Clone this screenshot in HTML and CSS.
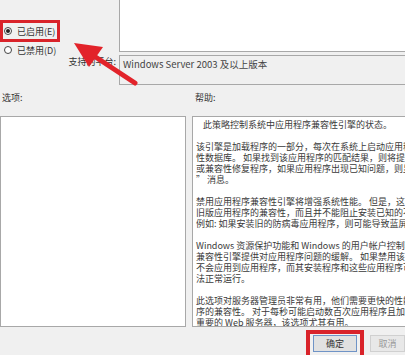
FILE: index.html
```html
<!DOCTYPE html>
<html lang="zh-CN">
<head>
    <meta charset="UTF-8">
    <meta name="viewport" content="width=device-width, initial-scale=1.0">
    <title>应用程序兼容性引擎 - 策略设置</title>
    <link rel="stylesheet" href="styles.css">
</head>
<body>
    <div class="policy-dialog">
        <div class="top-grid">
            <div class="state-group">
                <label class="radio-item marked">
                    <span class="radio checked"></span>
                    <span>已启用(E)</span>
                </label>
                <label class="radio-item plain">
                    <span class="radio"></span>
                    <span>已禁用(D)</span>
                </label>
            </div>
            <div class="comment-box"></div>
            <div class="platform-label">支持的平台:</div>
            <div class="platform-box">Windows Server 2003 及以上版本</div>
        </div>

        <div class="section-labels">
            <span>选项:</span>
            <span>帮助:</span>
        </div>

        <div class="panes">
            <div class="pane options-pane"></div>
            <div class="pane help-pane">
                <div class="help-line indent">此策略控制系统中应用程序兼容性引擎的状态。</div>
                <div class="help-blank"></div>
                <div class="help-line">该引擎是加载程序的一部分，每次在系统上启动应用程序时都会引用兼容</div>
                <div class="help-line">性数据库。 如果找到该应用程序的匹配结果，则将提供运行时解决方案</div>
                <div class="help-line">或兼容性修复程序，如果应用程序出现已知问题，则显示应用程序帮助</div>
                <div class="help-line">” 消息。</div>
                <div class="help-blank"></div>
                <div class="help-line">禁用应用程序兼容性引擎将增强系统性能。 但是，这将降低许多</div>
                <div class="help-line">旧版应用程序的兼容性，而且并不能阻止安装已知的不兼容</div>
                <div class="help-line">例如: 如果安装旧的防病毒应用程序，则可能导致蓝屏。)</div>
                <div class="help-blank"></div>
                <div class="help-line">Windows 资源保护功能和 Windows 的用户帐户控制功能使用</div>
                <div class="help-line">兼容性引擎提供对应用程序问题的缓解。 如果禁用该引擎，</div>
                <div class="help-line">不会应用到应用程序，而其安装程序和这些应用程序可能无</div>
                <div class="help-line">法正常运行。</div>
                <div class="help-blank"></div>
                <div class="help-line">此选项对服务器管理员非常有用，他们需要更快的性能并</div>
                <div class="help-line">序的兼容性。 对于每秒可能启动数百次应用程序且加载</div>
                <div class="help-line">重要的 Web 服务器，该选项尤其有用。</div>
            </div>
        </div>

        <div class="operate-btn-group">
            <div class="mark-box">
                <button class="btn btn-default">确定</button>
            </div>
            <button class="btn btn-faded">取消</button>
        </div>
    </div>

    <!-- 标注箭头 -->
    <svg class="annotation" width="405" height="355" viewBox="0 0 405 355">
        <line x1="135" y1="83" x2="94" y2="56" stroke="#e2232a" stroke-width="5" stroke-linecap="round"/>
        <polygon points="74,43 103,47 89,67" fill="#e2232a"/>
    </svg>
</body>
</html>
```

FILE: styles.css
```css
* {
    margin: 0;
    padding: 0;
    box-sizing: border-box;
}

body {
    font-family: "Noto Sans CJK SC", "Noto Sans", sans-serif;
    font-size: 9px;
    line-height: 11px;
    color: #333;
    background: #f0f0f0;
    width: 405px;
    height: 355px;
    overflow: hidden;
    position: relative;
}

.policy-dialog {
    width: 405px;
}

.top-grid {
    display: grid;
    grid-template-columns: 119px 1fr;
    grid-template-rows: 52px 33px;
}

.state-group {
    padding-top: 20px;
}

.radio-item {
    display: flex;
    align-items: center;
    gap: 5px;
    height: 16px;
}

.radio-item.marked {
    width: 60px;
    height: 22px;
    border: 3px solid #d9232a;
    padding-left: 1px;
}

.radio-item.plain {
    padding-left: 4px;
}

.radio {
    width: 8px;
    height: 8px;
    border: 1px solid #444;
    border-radius: 50%;
    background: #fff;
    display: flex;
    align-items: center;
    justify-content: center;
}

.radio.checked::after {
    content: "";
    width: 4px;
    height: 4px;
    border-radius: 50%;
    background: #222;
}

.comment-box {
    background: #fff;
    border: 1px solid #a8a8a8;
    border-top: none;
    border-right: none;
}

.platform-label {
    text-align: right;
    padding-right: 3px;
    padding-top: 4px;
}

.platform-box {
    margin-top: 3px;
    height: 30px;
    border: 1px solid #a8a8a8;
    border-right: none;
    padding: 3px 0 0 3px;
    white-space: nowrap;
    font-size: 9.5px;
    color: #444;
}

.section-labels {
    display: grid;
    grid-template-columns: 193px 1fr;
    margin-top: 7px;
    padding-left: 2px;
    height: 11px;
}

.panes {
    display: grid;
    grid-template-columns: 186px 1fr;
    gap: 6px;
    margin-top: 13px;
    height: 211px;
}

.pane {
    background: #fff;
    border: 1px solid #a8a8a8;
    overflow: hidden;
}

.help-pane {
    border-right: none;
    padding: 2px 0 0 3px;
    color: #3a3a3a;
}

.help-line {
    white-space: nowrap;
    height: 11px;
}

.help-line.indent {
    padding-left: 7px;
}

.help-blank {
    height: 11px;
}

.operate-btn-group {
    display: flex;
    align-items: flex-start;
    gap: 6px;
    margin-top: 3px;
    padding-left: 306px;
}

.mark-box {
    border: 4px solid #d9232a;
    border-bottom: none;
    padding: 1px 3px 8px 3px;
}

.btn {
    font-family: "Noto Sans CJK SC", sans-serif;
    font-size: 9px;
    width: 44px;
    height: 17px;
    background: #e1e1e1;
    border: 1px solid #adadad;
    color: #333;
}

.btn-default {
    border-color: #6f93c6;
}

.btn-faded {
    margin-top: 5px;
    color: #999;
    background: #e8e8e8;
    border-color: #d0d0d0;
}

.annotation {
    position: absolute;
    top: 0;
    left: 0;
    pointer-events: none;
}
```
